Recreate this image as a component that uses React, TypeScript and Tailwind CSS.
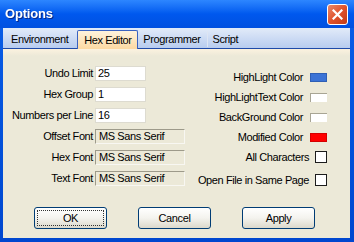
import React from "react";

const font = "font-['Tahoma','Liberation_Sans',sans-serif]";

function Swatch({ color }: { color: "blue" | "white" | "red" }) {
  const cls =
    color === "blue"
      ? "bg-[#3b73d6] border border-[#2f5fb5]"
      : color === "red"
        ? "bg-[#ff0000] border border-[#d40000]"
        : "bg-white border-l border-t border-[#a8a594] border-r-white border-b-white";
  return <div className={`w-[17px] h-[9px] ${cls}`} />;
}

function Check() {
  return <div className="w-[12px] h-[12px] bg-white border border-[#1c1c1c]" />;
}

function Field({ value, wide }: { value: string; wide?: boolean }) {
  if (wide) {
    return (
      <div className="w-[90px] h-[15px] bg-[#ece9d8] border-l border-t border-[#9d9a8a] border-r border-b border-r-[#f8f7f2] border-b-[#f8f7f2] pl-[3px] flex items-center text-[11px] leading-none text-black">
        {value}
      </div>
    );
  }
  return (
    <div className="w-[51px] h-[15px] bg-white border border-[#dddbd0] pl-[2px] flex items-center text-[11px] leading-none text-black">
      {value}
    </div>
  );
}

function Btn({ label, focus }: { label: string; focus?: boolean }) {
  return (
    <button className="w-[73px] h-[22px] rounded-[3px] border border-[#003c74] bg-gradient-to-b from-[#ffffff] via-[#f4f3ee] to-[#dcd9cb] p-[2px] text-[11px] text-black leading-none">
      <span
        className={`flex w-full h-full items-center justify-center ${focus ? "border border-dotted border-[#333]" : ""}`}
      >
        {label}
      </span>
    </button>
  );
}

export default function App() {
  const left = [
    { label: "Undo Limit", value: "25" },
    { label: "Hex Group", value: "1" },
    { label: "Numbers per Line", value: "16" },
    { label: "Offset Font", value: "MS Sans Serif", wide: true },
    { label: "Hex Font", value: "MS Sans Serif", wide: true },
    { label: "Text Font", value: "MS Sans Serif", wide: true },
  ];
  const right: { label: string; kind: "blue" | "white" | "red" | "check" }[] = [
    { label: "HighLight Color", kind: "blue" },
    { label: "HighLightText Color", kind: "white" },
    { label: "BackGround Color", kind: "white" },
    { label: "Modified Color", kind: "red" },
    { label: "All Characters", kind: "check" },
    { label: "Open File in Same Page", kind: "check" },
  ];

  return (
    <div className={`w-[354px] h-[242px] bg-gradient-to-b from-[#0a5ee8] to-[#0047cf] flex flex-col tracking-[-0.4px] ${font}`}>
      {/* title bar */}
      <div className="h-[28px] flex items-center justify-between bg-gradient-to-b from-[#2d86ff] via-[#0058ee] to-[#0050e0]">
        <span className="pl-[5px] text-[13px] font-bold tracking-[-0.2px] text-white font-['Liberation_Sans',sans-serif] drop-shadow-[1px_1px_0_#0a2a8a]">
          Options
        </span>
        <div className="mr-[6px] w-[21px] h-[21px] rounded-[3px] border border-white bg-gradient-to-br from-[#e8886a] via-[#e0522c] to-[#c23a14] flex items-center justify-center">
          <svg width="11" height="11" viewBox="0 0 11 11">
            <path d="M1.5 1.5 L9.5 9.5 M9.5 1.5 L1.5 9.5" stroke="white" strokeWidth="2.2" strokeLinecap="square" />
          </svg>
        </div>
      </div>

      {/* body */}
      <div className="flex-1 ml-[3px] mr-[4px] mb-[4px] bg-[#ece9d8] flex flex-col">
        {/* tab strip */}
        <div className="h-[21px] flex items-end bg-gradient-to-b from-[#e2ebf9] to-[#b8ccef] border-b border-[#1f4aa8] text-[11px] text-black">
          <div className="pl-[8px] pr-[9px] h-[18px] flex items-center">Environment</div>
          <div className="w-[61px] h-[19px] -mb-px flex items-center justify-center border border-b-0 border-[#3a62c0] rounded-t-[2px] bg-gradient-to-b from-[#fff3dc] to-[#fcd9a2]">
            Hex Editor
          </div>
          <div className="pl-[5px] pr-[7px] h-[18px] flex items-center">Programmer</div>
          <div className="w-px h-[16px] mb-[1px] bg-[#8ea7d6] border-r border-white/70" />
          <div className="pl-[4px] h-[18px] flex items-center">Script</div>
        </div>
        <div className="h-[7px] bg-gradient-to-b from-[#fcf2df] to-[#ece9d8]" />

        {/* panels */}
        <div className="flex pt-[10px] text-[11px] text-black leading-none">
          <div className="flex flex-col gap-[6px]">
            {left.map((r) => (
              <div key={r.label} className="flex items-center h-[15px]">
                <span className="w-[92px] text-right pr-[2px]">{r.label}</span>
                <Field value={r.value} wide={r.wide} />
              </div>
            ))}
          </div>
          <div className="flex-1 flex flex-col items-end pr-[23px] pt-[1px]">
            {right.map((r, i) => (
              <div key={r.label} className={`flex items-center h-[20px] ${i === 5 ? "mt-[3px]" : ""}`}>
                <span className={r.kind === "check" ? "mr-[6px]" : "mr-[7px]"}>{r.label}</span>
                {r.kind === "check" ? <Check /> : <Swatch color={r.kind} />}
              </div>
            ))}
          </div>
        </div>

        {/* buttons */}
        <div className="flex gap-[31px] pl-[31px] mt-auto mb-[9px]">
          <Btn label="OK" focus />
          <Btn label="Cancel" />
          <Btn label="Apply" />
        </div>
      </div>
    </div>
  );
}
